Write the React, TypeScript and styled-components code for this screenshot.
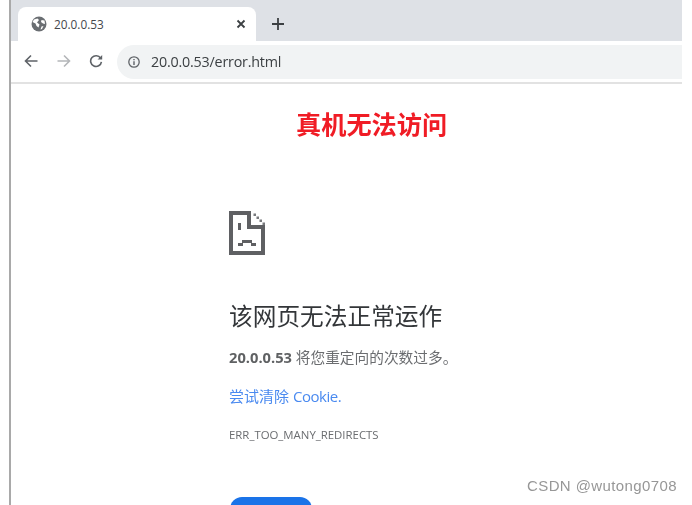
import React from 'react';
import styled, { createGlobalStyle } from 'styled-components';

const GlobalStyle = createGlobalStyle`
  html, body {
    margin: 0;
    padding: 0;
    background: #fff;
  }
  body {
    width: 692px;
    height: 505px;
    overflow: hidden;
    font-family: "Open Sans", "Noto Sans CJK SC", sans-serif;
  }
`;

const Shot = styled.div`
  position: relative;
  width: 692px;
  height: 505px;
  overflow: hidden;
  padding: 0 10px 0 9px;
  box-sizing: border-box;
`;

const Browser = styled.div`
  height: 100%;
  border-left: 2px solid #a9a9a9;
  display: flex;
  flex-direction: column;
  filter: blur(0.35px);
`;

const TabStrip = styled.div`
  height: 41px;
  flex: none;
  background: #dee1e6;
  display: flex;
  align-items: flex-end;
  padding-left: 7px;
`;

const Tab = styled.div`
  width: 238px;
  height: 34px;
  box-sizing: border-box;
  background: #fff;
  border-radius: 8px 8px 0 0;
  display: flex;
  align-items: center;
  padding: 0 10px 0 13px;
  gap: 7px;
`;

const TabTitle = styled.span`
  flex: 1;
  font-size: 11.8px;
  color: #45484c;
`;

const NewTab = styled.div`
  width: 44px;
  height: 34px;
  display: flex;
  align-items: center;
  justify-content: center;
`;

const Toolbar = styled.div`
  height: 43px;
  flex: none;
  box-sizing: border-box;
  background: #fff;
  border-bottom: 2px solid #e2e2e2;
  display: flex;
  align-items: flex-start;
  padding: 4px 0 0 13px;
`;

const NavGroup = styled.div`
  height: 32px;
  display: flex;
  align-items: center;
  gap: 18.5px;
`;

const Omnibox = styled.div`
  flex: 1;
  height: 34px;
  box-sizing: border-box;
  margin-left: 14px;
  background: #f1f3f4;
  border-radius: 17px 0 0 17px;
  display: flex;
  align-items: center;
  padding: 0 0 1px 11px;
  gap: 11px;
`;

const Url = styled.span`
  font-size: 14.3px;
  color: #3c4043;
  letter-spacing: -0.2px;
`;

const Page = styled.main`
  flex: 1;
  min-height: 0;
  display: flex;
  flex-direction: column;
  padding-left: 218px;
`;

const Banner = styled.h1`
  margin: 24px 0 0 67px;
  font-size: 25.2px;
  line-height: 32px;
  font-weight: 700;
  color: #f01c25;
`;

const SadIcon = styled.svg`
  display: block;
  margin-top: 71px;
  flex: none;
`;

const Heading = styled.h2`
  margin: 43px 0 0;
  font-size: 23.7px;
  line-height: 36px;
  font-weight: 400;
  color: #333639;
`;

const Message = styled.p`
  margin: 13px 0 0;
  font-size: 14.7px;
  line-height: 20px;
  color: #6b6d70;

  & > b {
    font-weight: 700;
    color: #5f6163;
  }
`;

const TryLink = styled.a`
  display: block;
  margin-top: 19px;
  font-size: 15px;
  line-height: 20px;
  color: #4a8af0;

  & > span {
    letter-spacing: -0.45px;
  }
`;

const ErrorCode = styled.div`
  margin-top: 21px;
  font-size: 11.4px;
  line-height: 16px;
  color: #6b6d70;
`;

const ReloadButton = styled.div`
  margin-top: 54px;
  margin-left: 1px;
  flex: none;
  width: 82px;
  height: 36px;
  border-radius: 12px;
  background: #1a73e8;
`;

const Watermark = styled.div`
  position: absolute;
  left: 527px;
  top: 477px;
  font-family: "Liberation Sans", sans-serif;
  font-size: 15px;
  letter-spacing: 0.4px;
  color: #979797;
`;

const GlobeIcon = () => (
  <svg width="16" height="16" viewBox="0 0 16 16">
    <circle cx="8" cy="8" r="7.5" fill="#6a6e72" />
    <path
      d="M3 3.5 6.5 2.5 8 4 6 6.5 8.5 8.5 7.5 11.5 5.5 10 4.5 7.5 1.5 6ZM10.5 4 13.5 4.5 14 8 12 7.5 10 6ZM10.5 10.5 12.5 10 11 13 9.5 13.5Z"
      fill="#fff"
    />
  </svg>
);

const CloseIcon = () => (
  <svg width="10" height="10" viewBox="0 0 10 10">
    <path d="M1.5 1.5 8.5 8.5M8.5 1.5 1.5 8.5" stroke="#3c4043" strokeWidth="1.8" fill="none" />
  </svg>
);

const PlusIcon = () => (
  <svg width="12" height="12" viewBox="0 0 12 12">
    <path d="M6 0V12M0 6H12" stroke="#3c4043" strokeWidth="1.8" fill="none" />
  </svg>
);

const ArrowIcon: React.FC<{ right?: boolean; color: string }> = ({ right, color }) => (
  <svg width="14" height="14" viewBox="0 0 14 14" style={right ? { transform: 'scaleX(-1)' } : undefined}>
    <path d="M13.5 7H1.5M7 1.5 1.5 7 7 12.5" stroke={color} strokeWidth="1.6" fill="none" />
  </svg>
);

const ReloadIcon = () => (
  <svg width="14" height="14" viewBox="0 0 14 14">
    <path d="M11.6 4.2A5.4 5.4 0 1 0 12.4 7.8" stroke="#5f6368" strokeWidth="1.6" fill="none" />
    <path d="M13.2 1V5.6H8.6Z" fill="#5f6368" />
  </svg>
);

const InfoIcon = () => (
  <svg width="12" height="12" viewBox="0 0 12 12">
    <circle cx="6" cy="6" r="5.2" stroke="#5f6368" strokeWidth="1.3" fill="none" />
    <path d="M6 5.2V9M6 3V4.3" stroke="#5f6368" strokeWidth="1.4" fill="none" />
  </svg>
);

const SadTab = () => (
  <SadIcon width="36" height="44" viewBox="0 0 36 44">
    <path d="M0 0H22V14H36V44H0ZM4 4V40H32V18H18V4Z" fill="#5f6063" />
    <path d="M24.5 2.5h2.5v2.5h-2.5zM27.5 5.5h2.5v2.5h-2.5zM30.5 8.5h2.5v2.5h-2.5zM33.5 11.5h2.5v2.5h-2.5z" fill="#77797c" />
    <path d="M9 12h3v7H9zM9 32h4v-3h10v3h4v3h-5v-3H14v3H9z" fill="#5f6063" />
  </SadIcon>
);

export default function App() {
  return (
    <>
      <GlobalStyle />
      <Shot>
        <Browser>
          <TabStrip>
            <Tab>
              <GlobeIcon />
              <TabTitle>20.0.0.53</TabTitle>
              <CloseIcon />
            </Tab>
            <NewTab>
              <PlusIcon />
            </NewTab>
          </TabStrip>
          <Toolbar>
            <NavGroup>
              <ArrowIcon color="#5f6368" />
              <ArrowIcon right color="#b4b6b9" />
              <ReloadIcon />
            </NavGroup>
            <Omnibox>
              <InfoIcon />
              <Url>20.0.0.53/error.html</Url>
            </Omnibox>
          </Toolbar>
          <Page>
            <Banner>真机无法访问</Banner>
            <SadTab />
            <Heading>该网页无法正常运作</Heading>
            <Message>
              <b>20.0.0.53</b> 将您重定向的次数过多。
            </Message>
            <TryLink>尝试清除 <span>Cookie.</span></TryLink>
            <ErrorCode>ERR_TOO_MANY_REDIRECTS</ErrorCode>
            <ReloadButton />
          </Page>
        </Browser>
        <Watermark>CSDN @wutong0708</Watermark>
      </Shot>
    </>
  );
}
